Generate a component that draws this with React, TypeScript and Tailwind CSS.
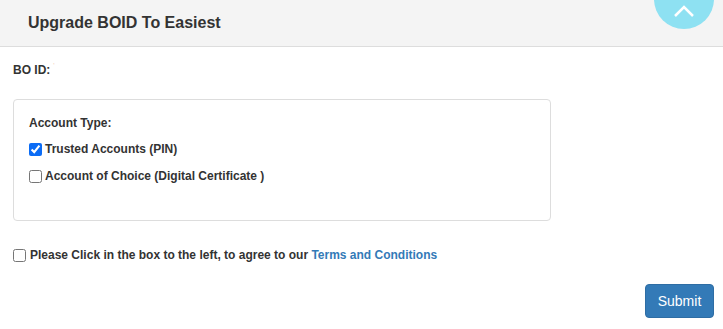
import React from "react";

export default function App() {
  return (
    <div className="w-[723px] h-[329px] bg-white overflow-hidden relative text-[#333]" style={{ fontFamily: '"Liberation Sans", Arial, sans-serif' }}>
      <div className="h-[47px] bg-[#f4f4f4] border-b border-[#dddddd] flex items-center pl-[28px]">
        <h4 className="text-[16px] font-bold leading-none">Upgrade BOID To Easiest</h4>
      </div>
      <div className="absolute left-[654px] top-[-31px] w-[60px] h-[60px] rounded-full bg-[#8ee1f2] flex items-end justify-center pb-[12px]">
        <svg width="22" height="12" viewBox="0 0 22 12" fill="none">
          <path d="M2 11 L11 2 L20 11" stroke="white" strokeWidth="2.5" />
        </svg>
      </div>
      <div className="px-[13px]">
        <div className="pt-[14px] h-[52px] text-[12px] font-bold flex items-start">
          <span>BO ID:</span>
          <span className="text-[#f3c9b5] text-[7px] ml-[3px] font-normal">'</span>
        </div>
        <div className="w-[538px] h-[122px] border border-[#dddddd] rounded-[4px] pl-[15px] pt-[16px] text-[12px] font-bold">
          <div className="leading-[14px]">Account Type:</div>
          <label className="flex items-center mt-[12px] leading-[14px]">
            <input type="checkbox" defaultChecked className="w-[13px] h-[13px] m-0 mr-[3px] accent-[#0b6cf5]" />
            Trusted Accounts (PIN)
          </label>
          <label className="flex items-center mt-[13px] leading-[14px]">
            <input type="checkbox" className="w-[13px] h-[13px] m-0 mr-[3px]" />
            Account of Choice (Digital Certificate )
          </label>
        </div>
        <label className="flex items-center mt-[27px] text-[12px] font-bold leading-[14px]">
          <input type="checkbox" className="w-[13px] h-[13px] m-0 mr-[4px]" />
          Please Click in the box to the left, to agree to our&nbsp;<a className="text-[#337ab7]">Terms and Conditions</a>
        </label>
      </div>
      <div className="flex justify-end pr-[9px] mt-[22px]">
        <button className="w-[69px] h-[34px] bg-[#337ab7] text-white text-[14px] rounded-[4px] border border-[#2e6da4]">Submit</button>
      </div>
    </div>
  );
}
